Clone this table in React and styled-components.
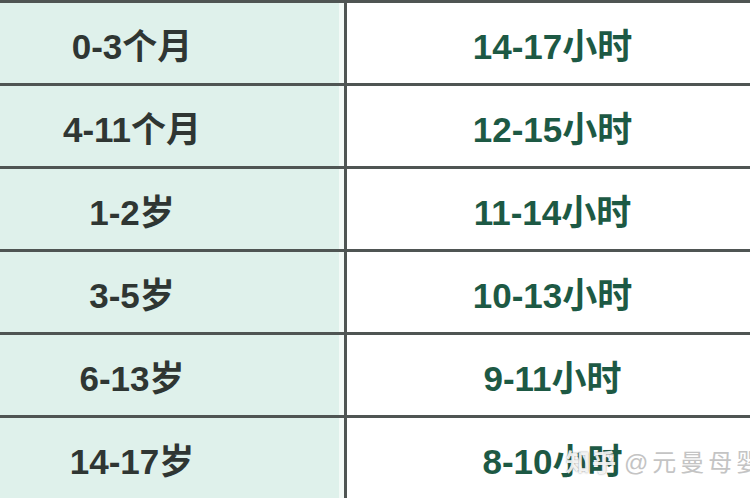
import styled, { createGlobalStyle } from 'styled-components';

const GlobalStyle = createGlobalStyle`
  html, body {
    margin: 0;
    padding: 0;
    background: #fff;
  }
  body {
    font-family: "Liberation Sans", "Noto Sans CJK SC", sans-serif;
  }
`

const Page = styled.div`
  position: relative;
  width: 750px;
  height: 500px;
  overflow: hidden;
  background: #fff;
`

const Row = styled.div`
  display: grid;
  grid-template-columns: 347px 1fr;
  height: 83px;
  box-sizing: border-box;
  border-top: 3px solid #4f5553;
`

const AgeCell = styled.div`
  display: flex;
  align-items: center;
  justify-content: center;
  padding-right: 80px;
  background: #dff1eb;
  border-right: 3px solid #4f5553;
  box-shadow: inset -5px 0 0 #f3faf7;
  color: #2f3633;
  font-size: 35px;
  font-weight: 700;
`

const SleepCell = styled.div`
  display: flex;
  align-items: center;
  justify-content: center;
  padding-left: 8px;
  color: #1d5944;
  font-size: 35px;
  font-weight: 700;
`

const Watermark = styled.div`
  position: absolute;
  left: 566px;
  top: 443px;
  display: flex;
  align-items: center;
  gap: 6px;
  font-size: 24px;
  white-space: nowrap;
  .site {
    color: rgba(255, 255, 255, 0.9);
    text-shadow: 0 0 2px rgba(60, 60, 60, 0.6);
    font-weight: 700;
    letter-spacing: 2px;
  }
  .name {
    color: #c4c4c4;
    letter-spacing: 4px;
  }
`

const rows = [
  ['0-3个月', '14-17小时'],
  ['4-11个月', '12-15小时'],
  ['1-2岁', '11-14小时'],
  ['3-5岁', '10-13小时'],
  ['6-13岁', '9-11小时'],
  ['14-17岁', '8-10小时'],
]

function App() {
  return (
    <Page>
      <GlobalStyle />
      {rows.map(([age, sleep]) => (
        <Row key={age}>
          <AgeCell>{age}</AgeCell>
          <SleepCell>{sleep}</SleepCell>
        </Row>
      ))}
      <Watermark>
        <span className="site">知乎</span>
        <span className="name">@元曼母婴</span>
      </Watermark>
    </Page>
  )
}

export default App
